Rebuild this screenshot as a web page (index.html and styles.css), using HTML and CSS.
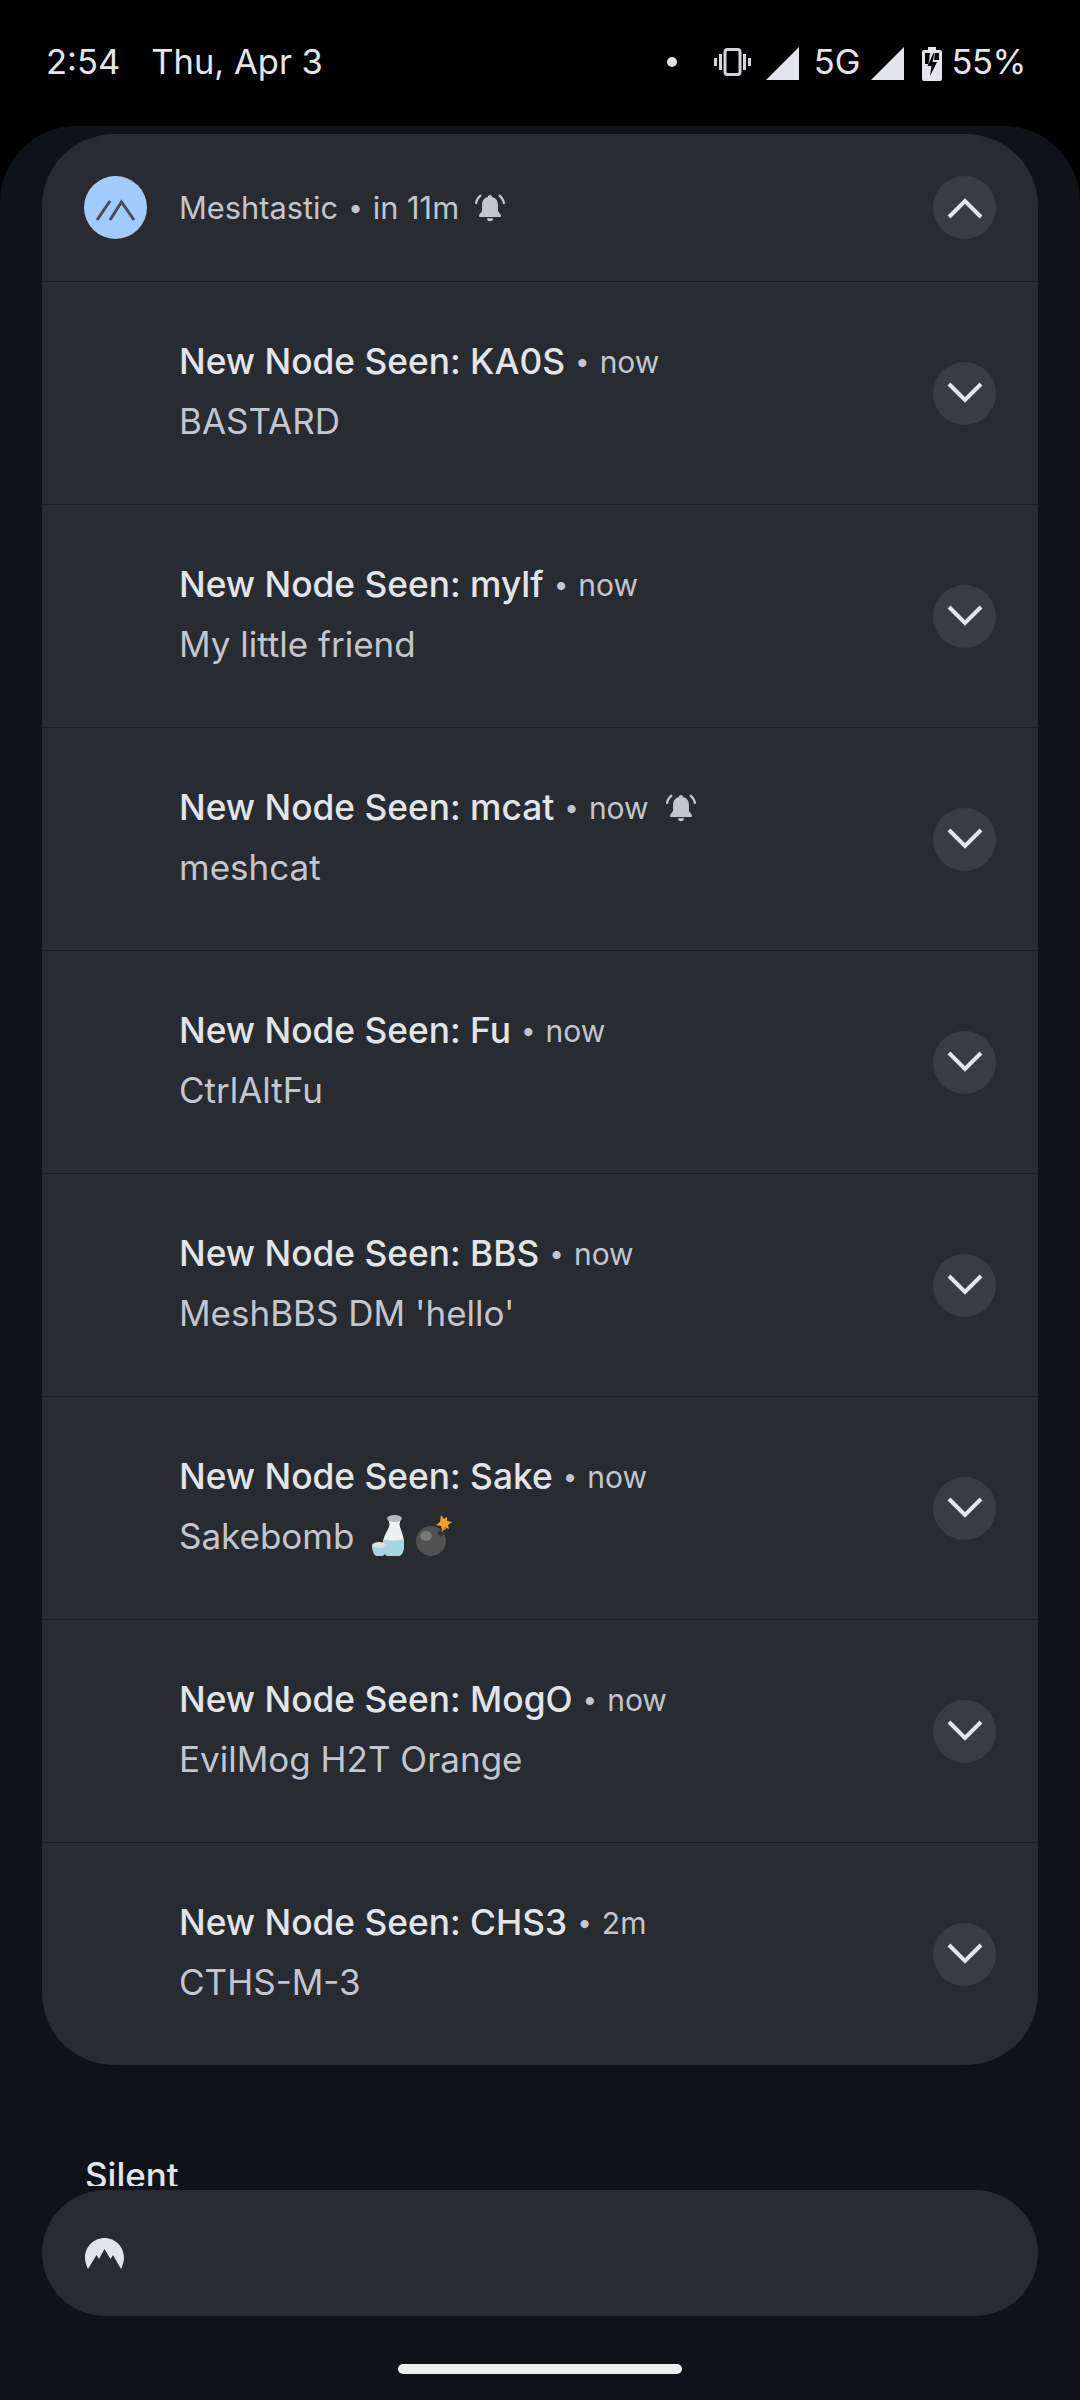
FILE: index.html
```html
<!DOCTYPE html>
<html lang="en">
<head>
<meta charset="utf-8">
<title>Notifications</title>
<link rel="stylesheet" href="styles.css">
</head>
<body>
<svg class="defs" width="0" height="0" aria-hidden="true">
  <symbol id="down" viewBox="0 0 36 24"><path d="M2 3 18 19 34 3" fill="none" stroke="currentColor" stroke-width="4"/></symbol>
  <symbol id="up" viewBox="0 0 36 24"><path d="M2 21 18 5 34 21" fill="none" stroke="currentColor" stroke-width="4"/></symbol>
  <symbol id="bell" viewBox="0 0 28 28">
    <path d="M14 1.800c-1.100 0-1.900.8-2 1.900C8.600 4.600 6.600 7.400 6.600 10.700v6.100L3.900 20.300v2h20.200v-2l-2.700-3.500v-6.100c0-3.300-2-6.100-5.400-7-.1-1.100-.9-1.900-2-1.900ZM11.200 23.500a2.800 2.800 0 0 0 5.600 0Z" fill="currentColor"/>
    <path d="M5.600 2C3 4 1.300 6.900.9 10.100M22.400 2c2.600 2 4.300 4.900 4.700 8.100" fill="none" stroke="currentColor" stroke-width="2.200"/>
  </symbol>
  <symbol id="signal" viewBox="0 0 33 33"><path d="M33 0V33H0Z" fill="currentColor"/></symbol>
</svg>

<header class="status">
  <div class="status-left"><span>2:54</span><span>Thu, Apr 3</span></div>
  <div class="status-right">
    <span class="dot"></span>
    <svg class="vib" viewBox="0 0 37 28"><rect x="11" y="1.500" width="15" height="25" rx="2.500" fill="none" stroke="currentColor" stroke-width="3"/><path d="M6.500 6v16M1.500 10v8M30.500 6v16M35.500 10v8" stroke="currentColor" stroke-width="3" fill="none"/></svg>
    <svg class="sig"><use href="#signal"/></svg>
    <span class="net">5G</span>
    <svg class="sig sig2"><use href="#signal"/></svg>
    <svg class="bat" viewBox="0 0 20 34"><path fill-rule="evenodd" d="M6 0h8v3h4a2 2 0 0 1 2 2v27a2 2 0 0 1-2 2H2a2 2 0 0 1-2-2V5a2 2 0 0 1 2-2h4ZM3 6v11h3.500L8 6ZM13 6l-1 7h5V6Z" fill="currentColor"/><path d="M11.500 6 5.500 19h4l-1.500 10 7-14h-4.500l2-9Z" fill="#000"/></svg>
    <span class="pct">55%</span>
  </div>
</header>

<main class="panel">
  <section class="card">
    <div class="group-head">
      <div class="app-ico"><svg viewBox="0 0 63 63"><path d="M13 44 26 25M26 44 37.500 26 50 44" fill="none" stroke="#474c55" stroke-width="3"/></svg></div>
      <div class="head-meta"><span>Meshtastic</span><span class="sep">•</span><span>in 11m</span><svg class="bell"><use href="#bell"/></svg></div>
      <button class="exp" aria-label="Collapse"><svg><use href="#up"/></svg></button>
    </div>

    <article class="row"><div class="txt"><div class="l1"><span class="title">New Node Seen: KA0S</span><span class="sep">•</span><span class="when">now</span></div><div class="l2">BASTARD</div></div><button class="exp" aria-label="Expand"><svg><use href="#down"/></svg></button></article>
    <article class="row"><div class="txt"><div class="l1"><span class="title">New Node Seen: mylf</span><span class="sep">•</span><span class="when">now</span></div><div class="l2">My little friend</div></div><button class="exp" aria-label="Expand"><svg><use href="#down"/></svg></button></article>
    <article class="row"><div class="txt"><div class="l1"><span class="title">New Node Seen: mcat</span><span class="sep">•</span><span class="when">now</span><svg class="bell"><use href="#bell"/></svg></div><div class="l2">meshcat</div></div><button class="exp" aria-label="Expand"><svg><use href="#down"/></svg></button></article>
    <article class="row"><div class="txt"><div class="l1"><span class="title">New Node Seen: Fu</span><span class="sep">•</span><span class="when">now</span></div><div class="l2">CtrlAltFu</div></div><button class="exp" aria-label="Expand"><svg><use href="#down"/></svg></button></article>
    <article class="row"><div class="txt"><div class="l1"><span class="title">New Node Seen: BBS</span><span class="sep">•</span><span class="when">now</span></div><div class="l2">MeshBBS DM 'hello'</div></div><button class="exp" aria-label="Expand"><svg><use href="#down"/></svg></button></article>
    <article class="row"><div class="txt"><div class="l1"><span class="title">New Node Seen: Sake</span><span class="sep">•</span><span class="when">now</span></div><div class="l2"><span>Sakebomb</span>
      <svg class="emoji sake" viewBox="0 0 34 42"><path d="M17 3h13l-1.500 6c0 4 4.500 10 4.500 20 0 6-1 12-6 12H17c-3 0-5-6-5-12 0-9 6.500-15 6.500-20Z" fill="#eef1f2"/><path d="M12 24c6 2 14 2 21 0 .3 9-1.500 17-6 17H17c-3 0-5-7-5-17Z" fill="#a5d5df"/><ellipse cx="23.500" cy="3.500" rx="7.500" ry="3.500" fill="#b5b8ba"/><path d="M1 30h15c0 6-2 11-5 11H6c-3 0-5-5-5-11Z" fill="#a5d5df"/><ellipse cx="8.500" cy="30" rx="7.500" ry="3" fill="#dcdedf"/></svg>
      <svg class="emoji bomb" viewBox="0 0 36 42"><circle cx="15" cy="26" r="15" fill="#515151"/><ellipse cx="10" cy="21" rx="6" ry="5" fill="#777"/><path d="M24 15l4 4-3 3-4-4Z" fill="#333"/><path d="M26 16c2-3 5-2 5-6" fill="none" stroke="#c98a3e" stroke-width="1.500"/><path d="M25 0l3 4 3-2 0 4 5 1-4 3 1 4-4-2-3 3-1-4-5-1 4-3Z" fill="#f7a21c"/></svg>
    </div></div><button class="exp" aria-label="Expand"><svg><use href="#down"/></svg></button></article>
    <article class="row"><div class="txt"><div class="l1"><span class="title">New Node Seen: MogO</span><span class="sep">•</span><span class="when">now</span></div><div class="l2">EvilMog H2T Orange</div></div><button class="exp" aria-label="Expand"><svg><use href="#down"/></svg></button></article>
    <article class="row"><div class="txt"><div class="l1"><span class="title">New Node Seen: CHS3</span><span class="sep">•</span><span class="when">2m</span></div><div class="l2">CTHS-M-3</div></div><button class="exp" aria-label="Expand"><svg><use href="#down"/></svg></button></article>
  </section>

  <div class="section-label"><span>Silent</span></div>

  <section class="pill">
    <svg class="nord" viewBox="0 0 39 31"><path d="M3 31C1 27 0 23 0 19.500 0 9 8.500 0 19.500 0S39 9 39 19.500c0 3.500-1 7.500-3 11.500L28 17 25.500 21 19.500 11 14 21 11.500 17Z" fill="currentColor"/></svg>
  </section>
</main>

<div class="home"></div>
</body>
</html>
```
FILE: styles.css
```css
* { box-sizing: border-box; }
html, body { margin: 0; padding: 0; }
body {
  position: relative;
  width: 1080px;
  height: 2400px;
  overflow: hidden;
  background: #000;
  font-family: Inter, Roboto, sans-serif;
  display: flex;
  flex-direction: column;
}
.defs { position: absolute; }

.status {
  height: 126px;
  flex: none;
  display: flex;
  justify-content: space-between;
  align-items: flex-start;
  padding: 39px 54px 0 46px;
  color: #e4e5ea;
  font-size: 34.500px;
  line-height: 46px;
}
.status-left { display: flex; gap: 31px; }
.status-right { display: flex; align-items: center; height: 46px; }
.dot { width: 10px; height: 10px; border-radius: 50%; background: currentColor; margin-right: 37px; }
.vib { width: 37px; height: 28px; margin-right: 15px; color: #d4d5da; }
.sig { width: 33px; height: 33px; margin-top: 2px; }
.net { margin: 0 11px 0 15px; }
.bat { width: 20px; height: 34px; margin: 3px 9px 0 18px; }
.pct { letter-spacing: -.4px; }

.panel {
  flex: 1;
  min-height: 0;
  background: #0f1216;
  border-radius: 76px 76px 0 0;
  padding: 8px 42px 0;
  display: flex;
  flex-direction: column;
}
.card {
  background: #282b30;
  border-radius: 72px;
  flex: none;
  height: 1931px;
  overflow: hidden;
}
.group-head {
  height: 147px;
  display: flex;
  align-items: center;
  padding: 0 42px;
}
.app-ico { width: 63px; height: 63px; border-radius: 50%; background: #a2cbfc; flex: none; }
.app-ico svg { display: block; width: 63px; height: 63px; }
.head-meta {
  flex: 1;
  margin-left: 32px;
  display: flex;
  align-items: center;
  color: #c3c6cd;
  font-size: 30.800px;
}
.sep { margin: 0 10px; font-size: 26px; }
.bell { width: 30px; height: 30px; margin-left: 16px; color: #c3c6cd; flex: none; }

.exp {
  width: 63px;
  height: 63px;
  border: 0;
  padding: 0;
  border-radius: 50%;
  background: #393c41;
  color: #e4e5ea;
  display: flex;
  align-items: center;
  justify-content: center;
  flex: none;
}
.exp svg { width: 36px; height: 24px; display: block; }

.row {
  height: 223px;
  border-top: 1px solid #1b1d21;
  display: flex;
  align-items: center;
  padding: 0 42px 0 137px;
}
.txt { flex: 1; min-width: 0; margin-top: -2px; }
.l1 { display: flex; align-items: center; height: 58px; margin-top: -1px; color: #c3c6cd; }
.title { color: #e3e4e8; font-size: 35.300px; font-weight: 500; }
.when { font-size: 30px; }
.l1 .bell { margin-left: 17px; }
.l2 { display: flex; align-items: center; height: 60px; color: #c3c6cd; font-size: 35px; }
.emoji { height: 42px; flex: none; }
.sake { width: 34px; margin-left: 17px; }
.bomb { width: 36px; margin-left: 11px; }

.section-label {
  flex: none;
  height: 121px;
  padding: 90px 0 0 43px;
  overflow: hidden;
  color: #e3e4e8;
  font-size: 35px;
  font-weight: 500;
  line-height: 40px;
}
.section-label span { display: block; }
.pill {
  flex: none;
  height: 126px;
  background: #282b30;
  border-radius: 63px;
  display: flex;
  align-items: center;
  padding: 0 43px;
  margin-top: 4px;
  color: #e3e4e8;
}
.nord { width: 39px; height: 31px; display: block; }

.home {
  position: absolute;
  left: 398px;
  top: 2364px;
  width: 284px;
  height: 10px;
  border-radius: 5px;
  background: #edeeee;
}
```
